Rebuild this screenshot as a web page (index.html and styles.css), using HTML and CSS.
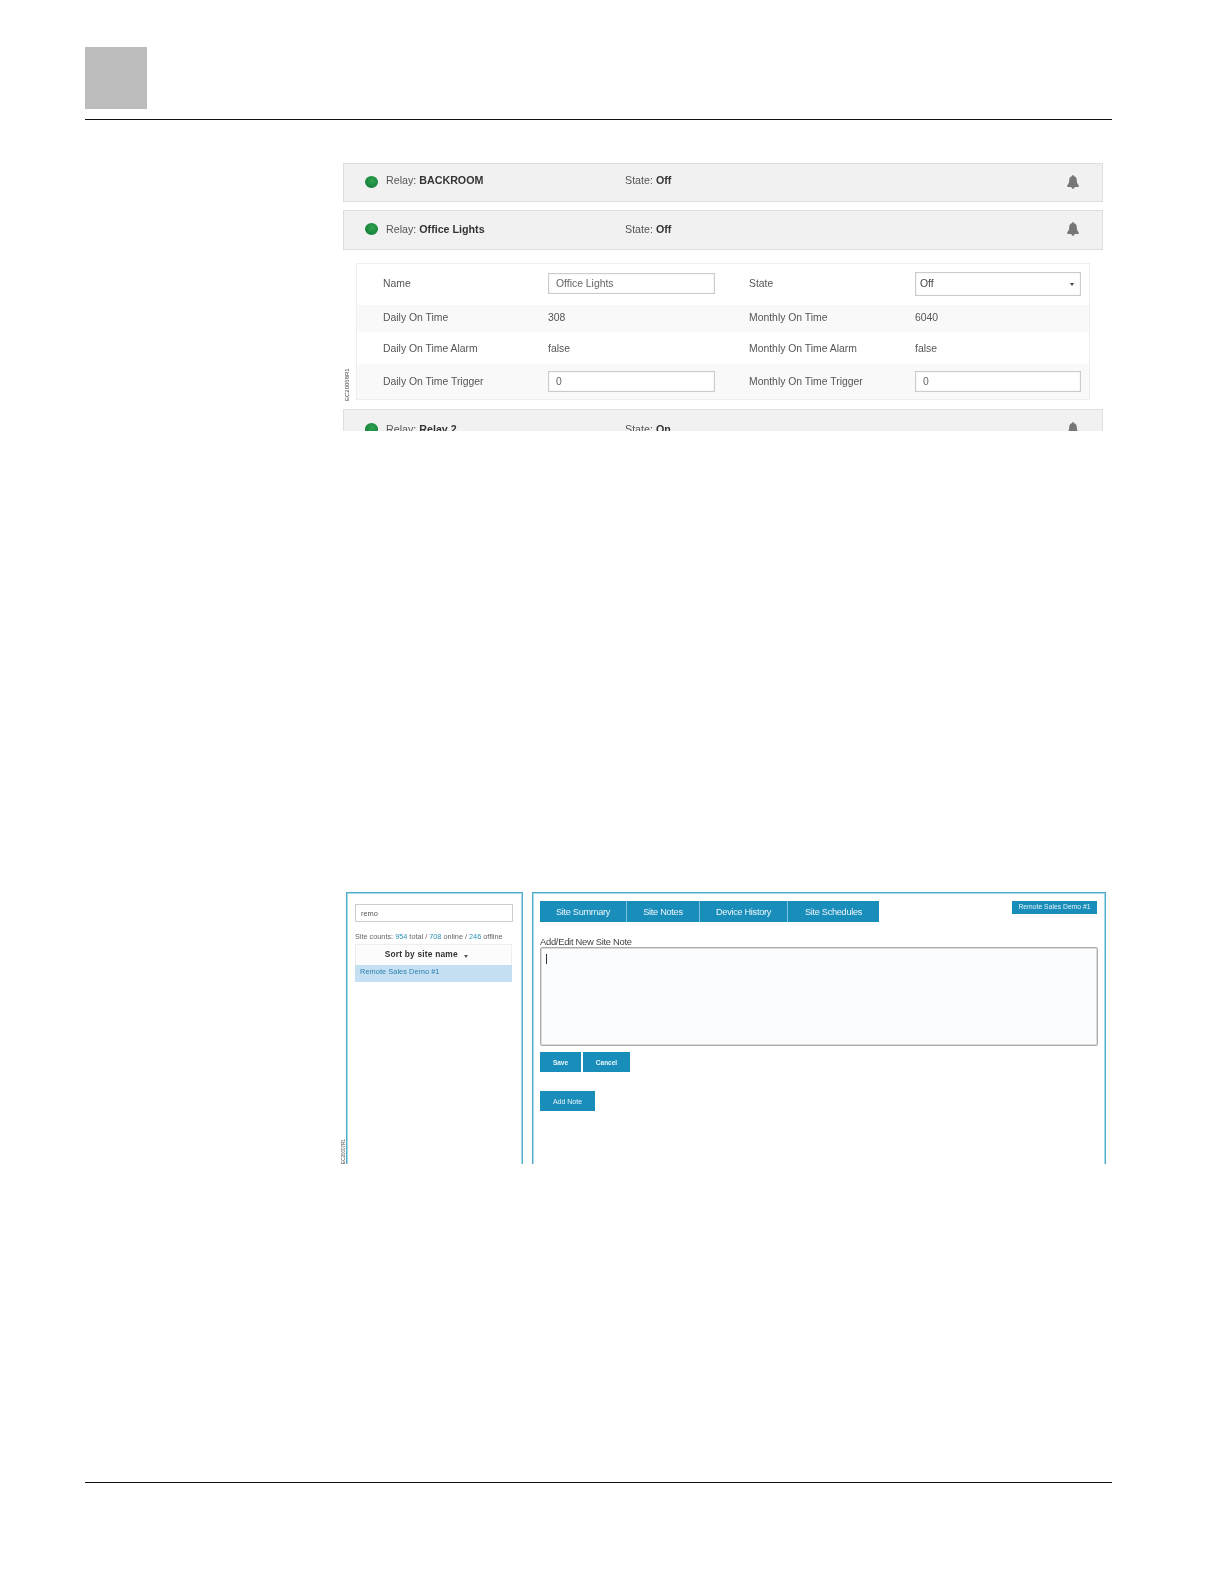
FILE: index.html
```html
<!DOCTYPE html>
<html lang="en">
<head>
<meta charset="utf-8">
<title>Relay and site notes</title>
<link rel="stylesheet" href="styles.css">
</head>
<body>
<div class="page">
  <header class="page-head">
    <div class="chapter-box"></div>
  </header>

  <section class="figure fig-relays">
    <span class="fig-code fig-code-relays">EC20068R1</span>
    <div class="relay-row relay-row-first">
      <span class="led"></span>
      <span class="relay-name">Relay: <b>BACKROOM</b></span>
      <span class="relay-state">State: <b>Off</b></span>
      <svg class="bell" viewBox="0 0 12 14"><path d="M6 .2c.7 0 1.100.5 1.100 1.100 1.900.5 2.700 2 2.700 4 0 2.600.8 3.900 1.900 5v1.700H7.600c0 .9-.7 1.800-1.600 1.800s-1.600-.9-1.600-1.800H.3v-1.700c1.100-1.100 1.900-2.400 1.900-5 0-2 .8-3.500 2.700-4C4.900.7 5.300.2 6 .2z"/></svg>
    </div>
    <div class="relay-row relay-row-open">
      <span class="led"></span>
      <span class="relay-name">Relay: <b>Office Lights</b></span>
      <span class="relay-state">State: <b>Off</b></span>
      <svg class="bell" viewBox="0 0 12 14"><path d="M6 .2c.7 0 1.100.5 1.100 1.100 1.900.5 2.700 2 2.700 4 0 2.600.8 3.900 1.900 5v1.700H7.600c0 .9-.7 1.800-1.600 1.800s-1.600-.9-1.600-1.800H.3v-1.700c1.100-1.100 1.900-2.400 1.900-5 0-2 .8-3.500 2.700-4C4.900.7 5.300.2 6 .2z"/></svg>
    </div>
    <div class="detail">
      <div class="detail-row row-name">
        <span>Name</span>
        <input class="field" type="text" value="Office Lights">
        <span>State</span>
        <div class="select-wrap"><select class="field field-select"><option>Off</option></select></div>
      </div>
      <div class="detail-row row-band row-daily">
        <span>Daily On Time</span><span>308</span>
        <span>Monthly On Time</span><span>6040</span>
      </div>
      <div class="detail-row row-alarm">
        <span>Daily On Time Alarm</span><span>false</span>
        <span>Monthly On Time Alarm</span><span>false</span>
      </div>
      <div class="detail-row row-band row-trigger">
        <span>Daily On Time Trigger</span>
        <input class="field" type="text" value="0">
        <span>Monthly On Time Trigger</span>
        <input class="field field-narrow" type="text" value="0">
      </div>
    </div>
    <div class="relay-row">
      <span class="led"></span>
      <span class="relay-name">Relay: <b>Relay 2</b></span>
      <span class="relay-state">State: <b>On</b></span>
      <svg class="bell" viewBox="0 0 12 14"><path d="M6 .2c.7 0 1.100.5 1.100 1.100 1.900.5 2.700 2 2.700 4 0 2.600.8 3.900 1.900 5v1.700H7.600c0 .9-.7 1.800-1.600 1.800s-1.600-.9-1.600-1.800H.3v-1.700c1.100-1.100 1.900-2.400 1.900-5 0-2 .8-3.500 2.700-4C4.900.7 5.300.2 6 .2z"/></svg>
    </div>
  </section>

  <section class="figure fig-notes">
    <span class="fig-code fig-code-notes">EC20007R1</span>
    <aside class="site-list">
      <input class="search" type="text" value="remo">
      <p class="counts">Site counts: <a>954</a> total / <a>708</a> online / <a>246</a> offline</p>
      <div class="sort-head">Sort by site name <i class="sort-caret"></i></div>
      <div class="site-item">Remote Sales Demo #1</div>
    </aside>
    <main class="site-main">
      <div class="main-top">
        <nav class="tabs">
          <span class="tab tab-summary">Site Summary</span>
          <span class="tab tab-notes">Site Notes</span>
          <span class="tab tab-history">Device History</span>
          <span class="tab tab-schedules">Site Schedules</span>
        </nav>
        <span class="badge">Remote Sales Demo #1</span>
      </div>
      <label class="note-label">Add/Edit New Site Note</label>
      <div class="note-box"><span class="caret-bar"></span></div>
      <div class="note-actions">
        <button class="btn btn-save">Save</button>
        <button class="btn btn-cancel">Cancel</button>
      </div>
      <button class="btn btn-add">Add Note</button>
    </main>
  </section>

  <footer class="page-foot"></footer>
</div>
</body>
</html>
```

FILE: styles.css
```css
* { box-sizing: border-box; }
html, body { margin: 0; padding: 0; background: #fff; }
body { font-family: "Liberation Sans", Arial, sans-serif; color: #555; }

.page { width: 1224px; height: 1584px; padding: 47px 112px 0 85px; }

.page-head { border-bottom: 1px solid #111; height: 73px; }
.chapter-box { width: 62px; height: 62px; background: #bdbdbd; }

.figure { position: relative; overflow: hidden; filter: blur(0.5px); }
.fig-code { position: absolute; color: #444; white-space: nowrap; transform: rotate(-90deg); transform-origin: left top; }

/* relay figure */
.fig-relays { margin: 43px 0 0 258px; width: 760px; height: 268px; }
.fig-code-relays { left: 1px; top: 238px; font-size: 6px; line-height: 6px; }

.relay-row { display: flex; align-items: center; width: 760px; height: 39px; margin-bottom: 8px; padding: 0 23px 0 21px; background: #f1f1f1; border: 1px solid #dedede; font-size: 10.7px; color: #555; }
.relay-row b { color: #333; }
.relay-row-first { padding-bottom: 2px; }
.relay-row-first .relay-name, .relay-row-first .relay-state { margin-bottom: 4px; }
.relay-row-open { height: 40px; margin-bottom: 13px; padding-bottom: 2px; }
.led { width: 13px; height: 12px; border-radius: 50%; background: radial-gradient(circle at 55% 40%, #2ea44f, #17813a 70%, #3a9a58); flex: none; }
.relay-name { margin-left: 8px; width: 239px; flex: none; }
.relay-state { flex: 1; }
.bell { width: 12px; height: 14px; fill: #777; flex: none; }

.detail { margin: 0 0 9px 13px; width: 734px; height: 137px; border: 1px solid #eee; font-size: 10.4px; }
.detail-row { display: grid; grid-template-columns: 165px 201px 166px 166px; align-items: center; padding-left: 26px; }
.row-name { height: 41px; padding-bottom: 2px; }
.row-daily { height: 27px; padding-bottom: 2px; }
.row-alarm { height: 32px; }
.row-trigger { height: 35px; }
.row-band { background: #f9f9f9; }

.field { width: 167px; height: 21px; border: 1px solid #ccc; background: #fff; padding: 0 7px; font: 10.4px "Liberation Sans", Arial, sans-serif; color: #666; box-shadow: inset 0 0 2px #e4e4e4; }
.field-narrow { width: 166px; }
.select-wrap { position: relative; width: 166px; height: 24px; }
.field-select { width: 100%; height: 100%; padding: 0 4px; appearance: none; -webkit-appearance: none; border-radius: 0; color: #444; }
.select-wrap::after { content: ""; position: absolute; right: 7px; top: 11px; border: 2px solid transparent; border-top: 3px solid #444; border-bottom: 0; }

/* notes figure */
.fig-notes { display: flex; gap: 9px; margin: 461px 0 0 255px; padding-left: 6px; width: 766px; height: 272px; }
.fig-code-notes { left: 1px; top: 272px; font-size: 4.6px; line-height: 5px; }

.site-list { width: 177px; height: 300px; border: 1px solid #4fabc9; box-shadow: inset 1px 1px 0 #a9d8e6, inset -1px 0 0 #a9d8e6; padding: 11px 9px 0 8px; flex: none; font-size: 7.3px; }
.search { display: block; width: 158px; height: 18px; border: 1px solid #ccc; padding: 0 5px; font: 7.4px "Liberation Sans", Arial, sans-serif; color: #555; }
.counts { margin: 10px 0 0; line-height: 9px; white-space: nowrap; color: #666; }
.counts a { color: #2b93b9; }
.sort-head { width: 157px; height: 21px; margin-top: 3px; padding-right: 14px; border: 1px solid #eee; border-bottom: 0; background: #fcfcfc; text-align: center; line-height: 18px; font-size: 8.4px; font-weight: bold; letter-spacing: 0.2px; color: #333; }
.sort-caret { display: inline-block; margin-left: 4px; vertical-align: -1px; border: 2.5px solid transparent; border-top: 3px solid #555; border-bottom: 0; }
.site-item { width: 157px; height: 17px; background: #c6e0f3; padding: 0 5px; line-height: 13px; font-size: 7.4px; letter-spacing: 0.05px; color: #2b7fb0; }

.site-main { width: 574px; height: 300px; border: 1px solid #4fabc9; box-shadow: inset 1px 1px 0 #a9d8e6, inset -1px 0 0 #a9d8e6; padding: 8px 8px 0 7px; flex: none; }
.main-top { display: flex; justify-content: space-between; align-items: flex-start; }
.tabs { display: flex; height: 21px; }
.tab { display: block; height: 21px; background: #1a8ebb; color: #eaf6fb; font-size: 9.2px; letter-spacing: -0.3px; line-height: 22px; text-align: center; border-right: 1px solid #7cc0da; }
.tab-summary { width: 87px; }
.tab-notes { width: 73px; }
.tab-history { width: 88px; }
.tab-schedules { width: 91px; border-right: 0; }
.badge { width: 85px; height: 13px; background: #1a8ebb; color: #e2f2f8; font-size: 6.8px; line-height: 12px; text-align: center; white-space: nowrap; }

.note-label { display: block; margin-top: 14px; font-size: 9.4px; letter-spacing: -0.28px; line-height: 11px; color: #444; }
.note-box { position: relative; width: 558px; height: 99px; background: #fbfcfd; border: 1px solid #aaa; box-shadow: inset 0 0 0 1px #dcdcdc; border-radius: 2px; }
.caret-bar { position: absolute; left: 5px; top: 6px; width: 1px; height: 10px; background: #333; }

.note-actions { display: flex; gap: 2px; margin-top: 6px; }
.btn { display: block; border: 0; padding: 0; background: #1a8ebb; color: #eaf6fb; font: bold 6.5px "Liberation Sans", Arial, sans-serif; height: 20px; }
.btn-save { width: 41px; }
.btn-cancel { width: 47px; }
.btn-add { width: 55px; margin-top: 19px; font-size: 7px; font-weight: normal; }

.page-foot { margin-top: 318px; border-top: 1px solid #111; }
```
